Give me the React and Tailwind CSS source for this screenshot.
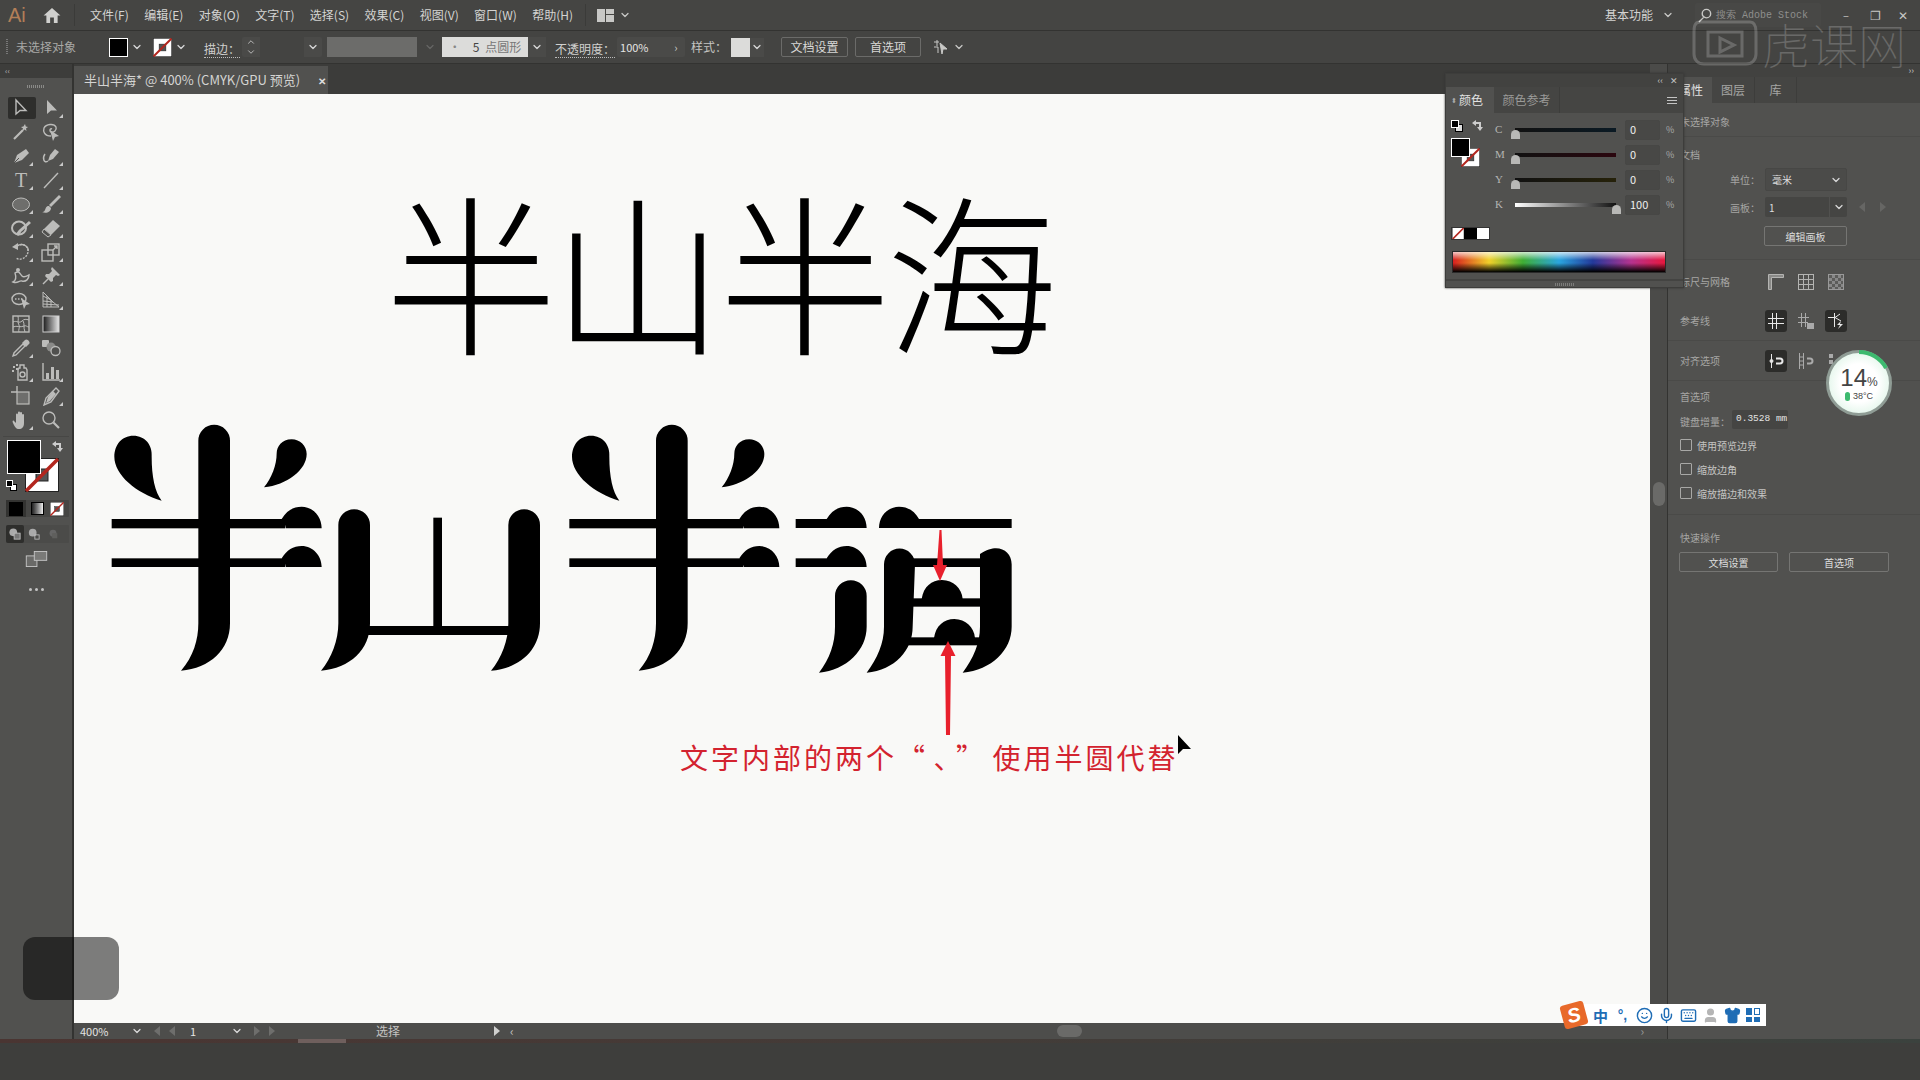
import React from 'react';
import { ChevronDown, Smile, Mic, Keyboard, User, Shirt } from 'lucide-react';

const Chev = ({ className = 'text-[#d8d8d8]' }) => <ChevronDown size={12} strokeWidth={2.5} className={className} />;

const Ic = ({ children, flag = true, active = false }) => (
  <div className="relative flex h-6 w-[30px] items-center justify-center">
    {active && <div className="absolute left-[2px] top-[1px] h-[22px] w-[28px] rounded-[2px] bg-[#2e2e2c]" />}
    <svg viewBox="0 0 20 20" className="relative h-5 w-5 text-[#bcbcba]" fill="currentColor" stroke="none">{children}</svg>
    {flag && <div className="absolute bottom-[2px] right-[3px] h-0 w-0 border-b-[4px] border-l-[4px] border-b-[#c8c8c8] border-l-transparent" />}
  </div>
);

const line = { fill: 'none', stroke: 'currentColor', strokeWidth: 1.4 };

function Tools() {
  return (
    <div className="grid w-[60px] grid-cols-2">
      <Ic flag={false} active><path d="M5 2 L5 16 L9 12.5 L15 12.5 Z" {...line} /></Ic>
      <Ic><path d="M6 2 L6 16 L10 12.5 L16 12.5 Z" /></Ic>
      <Ic flag={false}><path d="M3 17 L12 8" stroke="currentColor" strokeWidth="2.2" /><path d="M14 2 l.8 2.5 L17 5 l-2 1.4 .5 2.6 -2-1.5 -2 1.5 .5-2.6 -2-1.4 2.4-.5z" /></Ic>
      <Ic flag={false}><path d="M10 14 C3 14 2 9 3 6 C5 2 13 1 15 5 C16 8 13 11 10 10 C8 9 9 6 11 7" {...line} /><path d="M9 8 L18 14 L14 15 L12 19 Z" /></Ic>
      <Ic><path d="M15 3 L18 7 L11 14 L3 17 L6 9 Z" /><path d="M3 17 L8 12" stroke="#50504e" strokeWidth="1" /></Ic>
      <Ic><path d="M14 3 L18 6 L12 13 L7 15 L9 9 Z" /><path d="M7 15 C3 18 1 12 4 8" {...line} /></Ic>
      <Ic><text x="10" y="17" textAnchor="middle" fontSize="20" fontFamily="Liberation Serif, serif">T</text></Ic>
      <Ic><path d="M3 18 L17 3" {...line} /></Ic>
      <Ic><ellipse cx="10" cy="10.5" rx="8.5" ry="6.5" fill="#6e6e6c" stroke="currentColor" strokeWidth="1" /></Ic>
      <Ic><path d="M18 1 L20 3 L10 13 L8 11 Z" /><path d="M8 12 C5 12 5 14 4 16 C3 18 2 18 1 18 C5 20 10 18 10 14 Z" /></Ic>
      <Ic><ellipse cx="8" cy="10" rx="7" ry="6.5" {...line} strokeWidth="2" /><path d="M6 17 L9 13 L19 4" stroke="currentColor" strokeWidth="3" fill="none" /></Ic>
      <Ic><path d="M12 2 L19 8 L10 17 L3 11 Z" /><path d="M3 11 L10 17 L7 19 L1 14 Z" fill="#50504e" stroke="currentColor" strokeWidth="1" /></Ic>
      <Ic><path d="M6 4 C12 0 18 5 17 10 C16 16 9 19 5 16" {...line} strokeDasharray="2 1.2" /><path d="M7 1 L7 8 L1 5 Z" /><path d="M6 4 C12 0 18 5 17 9" {...line} /></Ic>
      <Ic><rect x="1" y="8" width="11" height="11" {...line} /><rect x="7" y="2" width="11" height="11" {...line} /><path d="M12 8 L16 4 M13 4 h3 v3" {...line} /></Ic>
      <Ic><path d="M2 16 C6 14 5 10 4 7 C8 4 9 8 11 10 C13 12 16 10 18 9 C18 13 15 16 11 15 C8 14 7 18 2 16 Z" {...line} /><circle cx="7" cy="4" r="2" /></Ic>
      <Ic><path d="M11 1 L19 9 L17 10 L15 9 L12 12 L12 15 L10 16 L4 10 L5 8 L8 8 L11 5 L10 3 Z" /><path d="M7 13 L2 18" {...line} /></Ic>
      <Ic flag={false}><ellipse cx="8" cy="9" rx="7" ry="5.5" {...line} /><path d="M4 9 h8" {...line} strokeDasharray="1.5 1.5" /><path d="M10 8 L19 14 L15 15 L13 19 Z" /></Ic>
      <Ic><path d="M2 2 L2 17 L18 17 M2 2 L12 12 L18 17 M2 6 L10 10 M2 11 L12 12 M6 6 L6 17 M10 10 L10 17 M2 14 L18 15" {...line} strokeWidth="1" /></Ic>
      <Ic flag={false}><rect x="2" y="2" width="16" height="16" fill="none" stroke="currentColor" strokeWidth="1.4" /><path d="M2 8 C6 6 8 10 11 7 C13 5 15 5 18 6 M7 2 C8 6 6 8 8 11 C9 14 7 16 8 18 M2 13 C6 11 9 14 13 12 C15 11 16 13 18 13 M12 7 C14 10 12 13 14 18" {...line} strokeWidth="1" /></Ic>
      <Ic flag={false}><defs><linearGradient id="tg"><stop offset="0" stopColor="#1a1a1a" /><stop offset="1" stopColor="#e8e8e8" /></linearGradient></defs><rect x="2" y="2" width="16" height="16" fill="url(#tg)" stroke="#cfcfcf" strokeWidth="1" /></Ic>
      <Ic><path d="M14 2 C16 0 20 4 18 6 L15 9 L11 5 Z" /><path d="M12 6 L14 8 L5 17 L2 18 L3 15 Z" {...line} /></Ic>
      <Ic flag={false}><rect x="1" y="2" width="7" height="7" rx="1" /><circle cx="10" cy="9" r="4.5" fill="#8a8a88" /><circle cx="14.5" cy="13" r="4.5" fill="#50504e" stroke="currentColor" strokeWidth="1.3" /></Ic>
      <Ic><path d="M2 4h2v2H2zM5 2h2v2H5zM5 6h2v2H5zM1 8h2v2H1z" /><path d="M9 3 h4 v3 h2 l1 2 v10 H7 V8 l1-2 h1z" {...line} /><circle cx="11.5" cy="12.5" r="2.5" {...line} /></Ic>
      <Ic><path d="M2 1 V18 H19" {...line} /><rect x="5" y="11" width="3" height="6" /><rect x="10" y="5" width="3" height="12" /><rect x="15" y="8" width="3" height="9" /></Ic>
      <Ic flag={false}><rect x="6" y="6" width="12" height="12" fill="#6e6e6c" stroke="currentColor" strokeWidth="1.2" /><path d="M0 6 H6 M6 0 V6" {...line} /></Ic>
      <Ic><path d="M15 2 L18 5 L10 16 L3 19 L5 12 Z" {...line} /><path d="M12 5 L15 8 L9 15 L5 17 L7 11Z" /></Ic>
      <Ic><path d="M5 9 V4.5 a1 1 0 0 1 2 0 V8 V2.5 a1 1 0 0 1 2 0 V8 V3 a1 1 0 0 1 2 0 V9 V5 a1 1 0 0 1 2 0 V13 C13 17 11 19 8 19 C5 19 4 17 2 13 C1 11 2 10 3 11 L5 13 Z" /></Ic>
      <Ic flag={false}><circle cx="8" cy="8" r="6" {...line} /><path d="M12.5 12.5 L18 18" stroke="currentColor" strokeWidth="2.2" /></Ic>
    </div>
  );
}

const NoneSwatch = ({ className }) => (
  <svg viewBox="0 0 34 34" className={className}>
    <rect x="0.5" y="0.5" width="33" height="33" fill="#fff" stroke="#222" />
    <rect x="11" y="11" width="12" height="12" fill="#555" stroke="#222" />
    <path d="M1 33 L33 1" stroke="#b3261e" strokeWidth="3.5" />
  </svg>
);

function LeftBar() {
  return (
    <div className="flex w-[74px] shrink-0 flex-col border-r-2 border-[#333331] bg-[#51514f]">
      <div className="flex h-[14px] items-center bg-[#3d3d3b] pl-[5px] text-[8px] leading-none text-[#bbb]">‹‹</div>
      <div className="flex h-[18px] items-center justify-center"><div className="mb-[2px] h-[3px] w-[18px] bg-[repeating-linear-gradient(90deg,#8a8a88_0,#8a8a88_1px,transparent_1px,transparent_2px)]" /></div>
      <div className="pl-[6px]"><Tools /></div>
      <div className="mx-[3px] mt-[4px] border-t border-[#474745]" />
      <div className="relative ml-[7px] mt-[3px] h-[52px] w-[58px]">
        <NoneSwatch className="absolute left-[18px] top-[18px] h-[34px] w-[34px]" />
        <div className="absolute left-0 top-0 h-[34px] w-[34px] border border-white bg-black" />
        <svg viewBox="0 0 12 12" className="absolute left-[44px] top-0 h-3 w-3 text-[#ccc]"><path d="M1 4 L5 1 L5 3 L10 3 L10 8 L12 8 L9 12 L6 8 L8 8 L8 5 L5 5 L5 7 Z" fill="currentColor" /></svg>
        <div className="absolute left-[-1px] top-[40px] h-[12px] w-[12px]">
          <div className="absolute left-[4px] top-[4px] h-[7px] w-[7px] border border-black bg-white" />
          <div className="absolute left-0 top-0 h-[7px] w-[7px] border border-white bg-black" />
        </div>
      </div>
      <div className="ml-[6px] mr-[3px] mt-[8px] flex h-[17px] items-center rounded-[1px] bg-[#464644]">
        <div className="flex h-full w-[20px] items-center justify-center bg-[#333331]"><div className="h-[14px] w-[14px] bg-black" /></div>
        <div className="ml-[5px] h-[13px] w-[13px] border border-black bg-linear-to-r from-[#222] to-[#eee]" />
        <NoneSwatch className="ml-[6px] h-[14px] w-[14px]" />
      </div>
      <div className="ml-[6px] mr-[3px] mt-[8px] flex h-[18px] items-center rounded-[1px] bg-[#4b4b49]">
        <div className="flex h-full w-[18px] items-center justify-center rounded-[2px] bg-[#2e2e2c]"><svg viewBox="0 0 14 14" className="h-3 w-3"><circle cx="5" cy="5" r="4.5" fill="#aaa" /><rect x="6" y="6" width="7" height="7" fill="#777" stroke="#bbb" /></svg></div>
        <div className="flex w-[20px] justify-center"><svg viewBox="0 0 14 14" className="h-3 w-3"><circle cx="5.5" cy="5.5" r="4.5" fill="#aaa" /><rect x="8" y="8" width="5" height="5" fill="none" stroke="#bbb" /></svg></div>
        <div className="flex w-[18px] justify-center"><svg viewBox="0 0 14 14" className="h-3 w-3"><circle cx="7" cy="6" r="4" fill="#666" /><rect x="6" y="6" width="6" height="6" fill="#5f5f5d" /></svg></div>
      </div>
      <div className="mt-[8px] flex justify-center"><svg viewBox="0 0 24 18" className="h-[16px] w-[23px]"><rect x="0.5" y="5.5" width="12" height="12" fill="#6a6a68" stroke="#c8c8c8" /><rect x="9.5" y="0.5" width="14" height="10" fill="#7a7a78" stroke="#c8c8c8" /></svg></div>
      <div className="mt-[21px] flex justify-center gap-[3px]"><div className="h-[3px] w-[3px] rounded-full bg-[#c4c4c4]" /><div className="h-[3px] w-[3px] rounded-full bg-[#c4c4c4]" /><div className="h-[3px] w-[3px] rounded-full bg-[#c4c4c4]" /></div>
    </div>
  );
}

function Han({ x }) {
  return (
    <g transform={`translate(${x} 410) scale(0.33333)`}>
      <path d="M100 77 C65 77 43 105 43 140 C43 195 110 250 185 272 C165 245 155 200 155 140 C158 105 135 77 100 77 Z" />
      <path d="M575 88 C545 88 530 110 530 130 C530 165 515 205 492 232 C560 225 620 180 620 132 C620 108 600 88 575 88 Z" />
      <path d="M295 92 A47.5 47.5 0 0 1 390 92 L390 640 C390 720 330 775 243 782 C280 740 295 690 295 640 Z" />
      <rect x="35" y="327" width="521" height="28" />
      <rect x="35" y="445" width="521" height="26" />
      <path d="M545 327 C560 302 580 290 605 290 C640 290 665 320 665 355 L558 355 C556 345 552 335 545 327 Z" />
      <path d="M545 445 C560 420 580 408 605 408 C640 408 665 438 665 471 L558 471 C556 462 552 452 545 445 Z" />
    </g>
  );
}

function Logotype() {
  return (
    <svg viewBox="74 94 1576 929" className="absolute left-0 top-0 h-[929px] w-[1576px]" fill="#000">
      <Han x={100} />
      <g transform="translate(100 410) scale(0.33333)">
        <path d="M715 345 A47.5 47.5 0 0 1 810 345 L810 640 C810 720 750 775 663 782 C695 745 715 690 715 640 Z" />
        <path d="M1225 345 A47.5 47.5 0 0 1 1320 345 L1320 640 C1320 720 1260 775 1173 782 C1205 745 1225 690 1225 640 Z" />
        <rect x="800" y="648" width="430" height="27" />
        <rect x="1000" y="323" width="26" height="330" />
      </g>
      <Han x={557.67} />
      <g transform="translate(560 410) scale(0.33333)">
        <rect x="707" y="327" width="106" height="27" />
        <rect x="707" y="445" width="106" height="26" />
        <path d="M800 327 C815 302 835 290 860 290 C895 290 920 320 920 354 L813 354 C811 345 807 335 800 327 Z" />
        <path d="M800 445 C815 420 835 408 860 408 C895 408 920 438 920 471 L813 471 C811 462 807 452 800 445 Z" />
        <path d="M825 558 A47.5 47.5 0 0 1 920 558 L920 650 C920 720 860 780 777 788 C810 745 825 700 825 650 Z" />
        <path d="M957 354 C957 320 982 290 1017 290 C1045 290 1065 305 1077 327 L1355 327 L1355 354 Z" />
        <path d="M972 463 A46.5 47.5 0 0 1 1065 463 L1058 650 C1058 720 1005 780 920 788 C952 745 972 700 972 650 Z" />
        <path d="M1260 432 C1280 420 1295 415 1308 415 C1335 415 1355 435 1355 463 L1355 650 C1355 720 1295 780 1208 788 C1240 745 1260 700 1260 650 Z" />
        <rect x="1040" y="445" width="225" height="26" />
        <rect x="1050" y="565" width="214" height="25" />
        <rect x="1030" y="682" width="232" height="24" />
        <path d="M1085 567 C1090 530 1115 510 1146 510 C1180 510 1205 535 1208 567 Z" />
        <path d="M1122 684 C1127 647 1152 627 1183 627 C1217 627 1242 652 1245 684 Z" />
      </g>
      <g fill="#e8202c">
        <path d="M939.5 530 L941.5 530 L943 565 L947 565 L940 581 L933 565 L937 565 Z" />
        <path d="M948 641 L955.5 656 L951 656 L950 735 L946 735 L945 656 L940.5 656 Z" />
      </g>
      <path d="M1178 735 L1178 754 L1183 749 L1191 749 Z" fill="#000" />
    </svg>
  );
}

const Pct = () => <span className="ml-[6px] text-[9px] text-[#aaa]">%</span>;

function CmykRow({ l, v, track, thumb }) {
  return (
    <div className="flex h-[25px] items-center">
      <span className="w-[21px] pl-[1px] font-['Liberation_Serif',serif] text-[11px] text-[#b5b5b3]">{l}</span>
      <div className="relative h-[4px] w-[101px]" style={{ background: track }}>
        <div className="absolute top-[2px] h-[9px] w-[9px] rounded-t-full bg-[#b8b8b6]" style={{ left: thumb }} />
      </div>
      <div className="ml-[9px] flex h-[20px] w-[35px] items-center rounded-[2px] border border-[#474745] bg-[#484846] pl-[4px] text-[11px] text-[#eee]">{v}</div>
      <Pct />
    </div>
  );
}

function ColorPanel() {
  return (
    <div className="absolute left-[1445px] top-[73px] h-[215px] w-[239px] border border-[#3d3d3b] bg-[#51514f] shadow-[0_0_2px_#333]">
      <div className="flex h-[13px] items-center justify-end gap-[7px] bg-[#424240] pr-[5px] text-[9px] leading-none text-[#c4c4c4]"><span>‹‹</span><span>✕</span></div>
      <div className="flex h-[26px] bg-[#454543] text-[12px]">
        <div className="flex w-[48px] items-center gap-[2px] bg-[#51514f] pl-[5px] text-[#e2e2e2]"><span className="text-[7px] text-[#aaa]">⬍</span>颜色</div>
        <div className="flex w-[66px] items-center justify-center border-r border-[#3d3d3b] text-[#9b9b99]">颜色参考</div>
        <div className="ml-auto mr-[6px] flex flex-col justify-center gap-[2px]"><div className="h-px w-[10px] bg-[#c4c4c4]" /><div className="h-px w-[10px] bg-[#c4c4c4]" /><div className="h-px w-[10px] bg-[#c4c4c4]" /></div>
      </div>
      <div className="flex">
        <div className="relative h-[110px] w-[48px] shrink-0">
          <div className="absolute left-[5px] top-[7px] h-[12px] w-[12px]"><div className="absolute left-[4px] top-[4px] h-[8px] w-[8px] border border-black bg-[#ddd]" /><div className="absolute left-0 top-0 h-[8px] w-[8px] border border-white bg-black" /></div>
          <svg viewBox="0 0 12 12" className="absolute left-[25px] top-[6px] h-3 w-3 text-[#ccc]"><path d="M1 4 L5 1 L5 3 L10 3 L10 8 L12 8 L9 12 L6 8 L8 8 L8 5 L5 5 L5 7 Z" fill="currentColor" /></svg>
          <NoneSwatch className="absolute left-[15px] top-[35px] h-[19px] w-[19px]" />
          <div className="absolute left-[5px] top-[25px] h-[19px] w-[19px] border border-white bg-black" />
        </div>
        <div className="pt-[4px]">
          <CmykRow l="C" v="0" track="linear-gradient(90deg,#111,#0b1a24)" thumb="-4px" />
          <CmykRow l="M" v="0" track="linear-gradient(90deg,#111,#2a060e)" thumb="-4px" />
          <CmykRow l="Y" v="0" track="linear-gradient(90deg,#111,#26220a)" thumb="-4px" />
          <CmykRow l="K" v="100" track="linear-gradient(90deg,#fff,#111)" thumb="97px" />
        </div>
      </div>
      <div className="ml-[5px] mt-[4px] flex h-[13px] w-[39px] border border-[#333]">
        <svg viewBox="0 0 13 13" className="h-full w-[13px]"><rect width="13" height="13" fill="#fff" /><path d="M0 13 L13 0" stroke="#b3261e" strokeWidth="2" /></svg>
        <div className="h-full w-[13px] bg-black" />
        <div className="h-full w-[13px] bg-white" />
      </div>
      <div className="relative ml-[6px] mt-[11px] h-[22px] w-[214px] border border-[#2a2a2a] bg-[linear-gradient(90deg,#d81f1f_0%,#f0d02a_17%,#3fae35_33%,#2aa5df_50%,#23399a_66%,#b5338f_84%,#e8173d_100%)]">
        <div className="absolute inset-0 bg-[linear-gradient(180deg,rgba(255,255,255,0.75)_0%,rgba(255,255,255,0)_40%,rgba(0,0,0,0)_55%,rgba(0,0,0,1)_100%)]" />
      </div>
      <div className="mt-[6px] flex h-[8px] items-center justify-center border-t-2 border-[#444442]"><div className="h-[3px] w-[20px] bg-[repeating-linear-gradient(90deg,#7c7c7a_0,#7c7c7a_1px,transparent_1px,transparent_2px)]" /></div>
    </div>
  );
}

const Check = ({ t }) => (
  <div className="flex h-[24px] items-center gap-[5px] pl-[12px]">
    <div className="h-[12px] w-[12px] rounded-[1px] border border-[#a8a8a6]" />
    <span className="text-[10px] text-[#c4c4c2]">{t}</span>
  </div>
);

const Cell = ({ on, children }) => (
  <div className={`flex h-[22px] w-[22px] items-center justify-center rounded-[3px] ${on ? 'bg-[#2c2c2a]' : ''}`}>
    <svg viewBox="0 0 18 18" className="h-[18px] w-[18px]" fill="none" stroke="#e8e8e8" strokeWidth="1">{children}</svg>
  </div>
);

function RightPanel() {
  const label = 'text-[10px] text-[#a6a6a4]';
  const div = 'border-b border-[#4a4a48]';
  return (
    <div className="flex w-[252px] shrink-0 flex-col bg-[#51514f]">
      <div className="flex h-[13px] items-center justify-end bg-[#424240] pr-[6px] text-[9px] leading-none text-[#c4c4c4]">››</div>
      <div className="flex h-[26px] bg-[#454543] text-[12px]">
        <div className="flex w-[44px] items-center justify-end bg-[#51514f] pr-[9px] text-[#e2e2e2]">属性</div>
        <div className="flex w-[43px] items-center justify-center border-r border-[#3d3d3b] text-[#a6a6a4]">图层</div>
        <div className="flex w-[42px] items-center justify-center border-r border-[#3d3d3b] text-[#a6a6a4]">库</div>
      </div>
      <div className={`flex h-[34px] items-center pl-[12px] pt-[4px] ${div} ${label}`}>未选择对象</div>
      <div className={`h-[123px] pt-[8px] ${div}`}>
        <div className={`flex h-[18px] items-center pl-[12px] ${label}`}>文档</div>
        <div className="mt-[5px] flex items-center">
          <span className={`w-[92px] text-right ${label}`}>单位：</span>
          <div className="ml-[5px] flex h-[23px] w-[82px] items-center justify-between rounded-[2px] border border-[#474745] bg-[#4b4b49] pl-[6px] pr-[4px] text-[10px] text-[#ddd]">毫米<Chev /></div>
        </div>
        <div className="mt-[6px] flex items-center">
          <span className={`w-[92px] text-right ${label}`}>画板：</span>
          <div className="ml-[5px] flex h-[20px] w-[82px] items-center rounded-[2px] bg-[#454543] pl-[4px] text-[10px] text-[#ddd]"><span className="flex-1">1</span><div className="flex h-full w-[18px] items-center justify-center border-l border-[#51514f]"><Chev /></div></div>
          <div className="ml-[12px] h-0 w-0 border-y-[5px] border-r-[6px] border-y-transparent border-r-[#666664]" />
          <div className="ml-[15px] h-0 w-0 border-y-[5px] border-l-[6px] border-y-transparent border-l-[#666664]" />
        </div>
        <div className="ml-[96px] mt-[9px] flex h-[20px] w-[83px] items-center justify-center rounded-[2px] border border-[#757573] text-[10px] text-[#ddd]">编辑画板</div>
      </div>
      <div className={`flex h-[41px] items-center pl-[12px] pt-[2px] ${label}`}>
        <span className="w-[88px]">标尺与网格</span>
        <svg viewBox="0 0 16 16" className="h-4 w-4" fill="none" stroke="#b4b4b2" strokeWidth="1"><path d="M0.5 15.5 V0.5 H15.5 V3.5 H3.5 V15.5 Z" fill="#8a8a88" /></svg>
        <svg viewBox="0 0 16 16" className="ml-[14px] h-4 w-4" fill="none" stroke="#b4b4b2" strokeWidth="1"><rect x="0.5" y="0.5" width="15" height="15" /><path d="M5.5 0 V16 M10.5 0 V16 M0 5.5 H16 M0 10.5 H16" /></svg>
        <div className="ml-[14px] h-4 w-4 border border-[#999] bg-[repeating-conic-gradient(#888_0_25%,#5c5c5a_0_50%)] bg-[length:6px_6px]" />
      </div>
      <div className={`flex h-[40px] items-center pl-[12px] ${div} ${label}`}>
        <span className="w-[85px]">参考线</span>
        <Cell on><path d="M5.5 1 V17 M9.5 1 V17 M1 6.5 H17 M1 11.5 H17" /></Cell>
        <div className="ml-[8px]"><Cell><path d="M4.5 1 V15 M8.5 1 V15 M1 5.5 H12 M1 10.5 H11" stroke="#aaa" /><rect x="10" y="11" width="7" height="6" fill="#aaa" stroke="none" /></Cell></div>
        <div className="ml-[8px]"><Cell on><path d="M7.5 1 V15 M1 5.5 H8 L13 2 M8 5.5 L14 9" /><path d="M14 9 L10 13 H13 L11 17 L16 12 H13 Z" fill="#e8e8e8" stroke="none" /></Cell></div>
      </div>
      <div className={`flex h-[40px] items-center pl-[12px] ${div} ${label}`}>
        <span className="w-[85px]">对齐选项</span>
        <Cell on><path d="M4.5 2 V16" /><circle cx="4.5" cy="9" r="1.5" fill="#e8e8e8" /><path d="M9 6.5 H13 A2.5 2.5 0 0 1 13 11.5 H9" strokeWidth="2" /></Cell>
        <div className="ml-[8px]"><Cell><path d="M2.5 1 V17 M6.5 1 V17 M2 5 H7 M2 9 H7 M2 13 H7" stroke="#aaa" /><path d="M10 6.5 H13 A2.5 2.5 0 0 1 13 11.5 H10" stroke="#aaa" strokeWidth="2" /></Cell></div>
        <div className="ml-[8px]"><Cell><rect x="2" y="2" width="4" height="4" fill="#aaa" stroke="none" /><rect x="2" y="8" width="4" height="4" fill="#aaa" stroke="none" /></Cell></div>
      </div>
      <div className={`h-[134px] pt-[6px] ${div}`}>
        <div className={`flex h-[18px] items-center pl-[12px] ${label}`}>首选项</div>
        <div className="mt-[5px] flex items-center pl-[12px]">
          <span className={`w-[52px] pt-[3px] ${label}`}>键盘增量：</span>
          <div className="flex h-[19px] w-[56px] items-center rounded-[2px] bg-[#454543] pl-[4px] font-['Liberation_Mono',monospace] text-[9.5px] whitespace-nowrap text-[#e4e4e4]">0.3528 mm</div>
        </div>
        <div className="mt-[4px]"><Check t="使用预览边界" /><Check t="缩放边角" /><Check t="缩放描边和效果" /></div>
      </div>
      <div className={`flex h-[37px] items-center pl-[12px] pt-[7px] ${label}`}>快速操作</div>
      <div className="flex gap-[11px] pl-[11px]">
        <div className="flex h-[20px] w-[99px] items-center justify-center rounded-[2px] border border-[#757573] text-[10px] text-[#ddd]">文档设置</div>
        <div className="flex h-[20px] w-[100px] items-center justify-center rounded-[2px] border border-[#757573] text-[10px] text-[#ddd]">首选项</div>
      </div>
    </div>
  );
}

function Gauge() {
  return (
    <div className="absolute left-[1826px] top-[350px] flex h-[66px] w-[66px] flex-col items-center justify-center rounded-full border-[3px] border-[#8f9c95] bg-[radial-gradient(circle,#ffffff_45%,#e9f8ef_70%,#bfeacf_100%)] text-[#444]">
      <svg viewBox="0 0 66 66" className="absolute -left-[3px] -top-[3px] h-[66px] w-[66px]"><path d="M33 2 A31 31 0 0 1 60 18" fill="none" stroke="#3dba6f" strokeWidth="4" /></svg>
      <div className="flex items-baseline font-['Liberation_Sans',sans-serif] leading-none"><span className="text-[24px]">14</span><span className="text-[12px]">%</span></div>
      <div className="mt-[2px] flex items-center gap-[3px] font-['Liberation_Sans',sans-serif] text-[9px] leading-none"><div className="h-[9px] w-[5px] rounded-full bg-[#3dba6f]" />38°C</div>
    </div>
  );
}

function Ime() {
  return (
    <div className="absolute left-[1562px] top-[1003px] flex items-center">
      <div className="relative z-10 flex h-[24px] w-[24px] -rotate-[15deg] items-center justify-center rounded-[3px] bg-[#e8692a] font-['Liberation_Sans',sans-serif] text-[20px] font-black italic leading-none text-white">S</div>
      <div className="-ml-[8px] flex h-[22px] w-[188px] items-center gap-[5px] bg-white pl-[14px] text-[#1f6db5]">
        <span className="w-[17px] text-center text-[15px] font-bold leading-none">中</span>
        <span className="w-[17px] text-center font-['Liberation_Sans',sans-serif] text-[14px] font-bold leading-none">°,</span>
        <Smile size={17} />
        <Mic size={17} />
        <Keyboard size={17} />
        <User size={17} className="text-[#b5b5b5]" fill="#b5b5b5" />
        <Shirt size={17} fill="#1f6db5" />
        <div className="grid h-[14px] w-[14px] grid-cols-2 gap-[2px]"><div className="bg-[#1f6db5]" /><div className="border border-[#1f6db5]" /><div className="bg-[#1f6db5]" /><div className="bg-[#1f6db5]" /></div>
      </div>
    </div>
  );
}

function Watermark() {
  return (
    <div className="absolute left-[1692px] top-[18px] flex items-center gap-[4px] whitespace-nowrap text-white opacity-20">
      <svg viewBox="0 0 66 50" className="h-[50px] w-[66px]" fill="none" stroke="currentColor" strokeWidth="3">
        <path d="M8 4 H58 M8 4 C2 4 2 10 2 14 V36 C2 42 6 46 12 46 H54 C60 46 64 42 64 36 V14 C64 8 62 4 58 4" />
        <path d="M16 14 H50 V38 H16 Z" />
        <path d="M28 20 L42 27 L28 34 Z" />
      </svg>
      <span className="text-[48px] font-thin leading-none">虎课网</span>
    </div>
  );
}

const Menu = ({ children }) => <span className="text-[12px] text-[#d4d4d2]">{children}</span>;

const Dotted = ({ children }) => <span className="border-b border-dotted border-[#bbb] text-[12px] leading-[14px] text-[#d0d0ce]">{children}</span>;

export default function App() {
  return (
    <div className="relative flex h-[1080px] w-[1920px] flex-col overflow-hidden bg-[#3e3e3c] [font-family:'Noto_Sans_CJK_SC','Liberation_Sans',sans-serif]">
      {/* menu bar */}
      <div className="flex h-[31px] shrink-0 items-center border-b border-[#333331] bg-[#454543]">
        <span className="ml-[8px] w-[20px] font-['Liberation_Sans',sans-serif] text-[20px] leading-none text-[#b37f58]">Ai</span>
        <svg viewBox="0 0 18 16" className="ml-[15px] h-[15px] w-[18px]" fill="#d0d0ce"><path d="M9 0 L18 8 H15 V16 H11 V10 H7 V16 H3 V8 H0 Z" /></svg>
        <div className="ml-[13px] h-[22px] w-px bg-[#3b3b39]" />
        <div className="ml-[15px] flex gap-[15.4px]">
          <Menu>文件(F)</Menu><Menu>编辑(E)</Menu><Menu>对象(O)</Menu><Menu>文字(T)</Menu><Menu>选择(S)</Menu><Menu>效果(C)</Menu><Menu>视图(V)</Menu><Menu>窗口(W)</Menu><Menu>帮助(H)</Menu>
        </div>
        <div className="ml-[12px] h-[22px] w-px bg-[#3b3b39]" />
        <svg viewBox="0 0 17 13" className="ml-[11px] h-[13px] w-[17px]" fill="#c8c8c6"><rect width="8" height="13" /><rect x="9" width="8" height="5" /><rect x="9" y="6" width="8" height="7" /></svg>
        <Chev className="ml-[5px] text-[#c8c8c6]" />
        <div className="ml-auto flex items-center">
          <span className="text-[12px] text-[#d4d4d2]">基本功能</span>
          <Chev className="ml-[9px] text-[#c8c8c6]" />
          <div className="ml-[21px] flex h-[24px] w-[126px] items-center gap-[3px] rounded-[2px] bg-[#484846] pl-[3px]">
            <svg viewBox="0 0 16 16" className="h-[15px] w-[15px]" fill="none" stroke="#c8c8c6" strokeWidth="1.5"><circle cx="9" cy="6" r="4.5" /><path d="M6 10 L1 15" /></svg>
            <span className="whitespace-nowrap font-['Liberation_Mono',monospace] text-[10px] text-[#8f8f8d]">搜索 Adobe Stock</span>
          </div>
          <div className="ml-[10px] flex h-[24px] w-[30px] items-center justify-center text-[11px] text-[#c8c8c6]">–</div>
          <div className="flex h-[24px] w-[28px] items-center justify-center text-[12px] text-[#c8c8c6]">❐</div>
          <div className="flex h-[24px] w-[28px] items-center justify-center text-[12px] text-[#c8c8c6]">✕</div>
          <div className="w-[3px]" />
        </div>
      </div>

      {/* options bar */}
      <div className="flex h-[33px] shrink-0 items-center border-b border-[#333331] bg-[#444442]">
        <div className="ml-[6px] h-[16px] w-[2px] bg-[repeating-linear-gradient(180deg,#777_0,#777_1px,transparent_1px,transparent_2px)]" />
        <span className="ml-[8px] w-[93px] text-[12px] text-[#a8a8a6]">未选择对象</span>
        <div className="h-[19px] w-[19px] border border-white bg-black" />
        <div className="flex h-[19px] w-[18px] items-center justify-center"><Chev /></div>
        <NoneSwatch className="ml-[7px] h-[19px] w-[19px]" />
        <div className="flex h-[19px] w-[18px] items-center justify-center"><Chev /></div>
        <div className="ml-[14px]"><Dotted>描边：</Dotted></div>
        <div className="ml-[2px] flex h-[20px] w-[80px] items-center rounded-[2px] bg-[#4a4a48]">
          <div className="flex h-full w-[18px] flex-col items-center justify-center"><ChevronDown size={10} className="rotate-180 text-[#ccc]" /><ChevronDown size={10} className="text-[#ccc]" /></div>
          <div className="h-full flex-1 bg-[#444442]" />
          <div className="flex h-full w-[18px] items-center justify-center"><Chev /></div>
        </div>
        <div className="ml-[5px] h-[20px] w-[90px] bg-[#6c6c6a]" />
        <div className="flex h-[20px] w-[25px] items-center justify-center"><Chev className="text-[#666664]" /></div>
        <div className="flex h-[20px] w-[86px] items-center justify-center gap-[6px] bg-[#dcdcda] text-[12px] text-[#444]"><span className="mr-[6px] text-[#888]">·</span>5 <span className="text-[#777]">点圆形</span></div>
        <div className="flex h-[20px] w-[18px] items-center justify-center bg-[#4a4a48]"><Chev /></div>
        <div className="ml-[9px]"><Dotted>不透明度：</Dotted></div>
        <div className="ml-[2px] flex h-[20px] w-[68px] items-center rounded-[2px] bg-[#4a4a48] pl-[3px] text-[11px] text-[#e4e4e2]"><span className="flex-1">100%</span><span className="w-[18px] text-center text-[#ccc]">›</span></div>
        <span className="ml-[6px] text-[12px] text-[#c4c4c2]">样式：</span>
        <div className="ml-[4px] h-[19px] w-[19px] bg-[#dcdcda]" />
        <div className="flex h-[19px] w-[14px] items-center justify-center bg-[#4a4a48]"><Chev /></div>
        <div className="ml-[17px] flex h-[20px] w-[67px] items-center justify-center rounded-[2px] border border-[#6b6b69] text-[12px] text-[#d8d8d6]">文档设置</div>
        <div className="ml-[7px] flex h-[20px] w-[66px] items-center justify-center rounded-[2px] border border-[#6b6b69] text-[12px] text-[#d8d8d6]">首选项</div>
        <svg viewBox="0 0 16 16" className="ml-[12px] h-[16px] w-[16px]" fill="none" stroke="#c8c8c6"><path d="M1 3 H6 M4 1 V7 M1 8 H5 V14" /><path d="M7 4 L14 10 L10 10 L9 15 Z" fill="#c8c8c6" /></svg>
        <Chev className="ml-[4px] text-[#c8c8c6]" />
      </div>

      {/* middle */}
      <div className="flex h-[975px] shrink-0">
        <LeftBar />
        <div className="flex w-[1576px] shrink-0 flex-col">
          <div className="flex h-[30px] shrink-0 items-end bg-[#3c3c3a]">
            <div className="flex h-[28px] w-[254px] items-center gap-[18px] bg-[#51514f] pl-[10px] text-[13px] text-[#d4d4d2]">
              <span className="whitespace-nowrap">半山半海* @ 400% (CMYK/GPU 预览)</span>
              <span className="text-[10px] font-bold text-[#ddd]">✕</span>
            </div>
          </div>
          <div className="relative flex-1 overflow-hidden bg-[#f9f9f7]">
            <div className="absolute left-[311px] top-[73px] whitespace-nowrap text-[172px] font-extralight leading-[200px] tracking-[-5px] text-black">半山半海</div>
            <Logotype />
            <div className="absolute left-[606px] top-[645px] whitespace-nowrap text-[28px] leading-[36px] tracking-[3px] text-[#d3232f]">文字内部的两个<span className="tracking-[8.5px]">“、”</span>使用半圆代替</div>
          </div>
          <div className="flex h-[16px] shrink-0 items-center bg-[#4d4d4b] text-[11px] text-[#e4e4e2]">
            <div className="ml-[4px] w-[50px] pl-[2px]">400%</div>
            <div className="flex w-[18px] justify-center"><Chev /></div>
            <div className="ml-[8px] flex w-[34px] items-center gap-[9px] text-[#6e6e6c]"><span className="h-0 w-0 border-y-[5px] border-r-[6px] border-y-transparent border-r-[#6e6e6c]" /><span className="h-0 w-0 border-y-[5px] border-r-[6px] border-y-transparent border-r-[#6e6e6c]" /></div>
            <div className="w-[40px] pl-[2px]">1</div>
            <div className="flex w-[18px] justify-center"><Chev /></div>
            <div className="ml-[8px] flex w-[36px] items-center gap-[9px]"><span className="h-0 w-0 border-y-[5px] border-l-[6px] border-y-transparent border-l-[#6e6e6c]" /><span className="h-0 w-0 border-y-[5px] border-l-[6px] border-y-transparent border-l-[#6e6e6c]" /></div>
            <div className="w-[196px] text-center text-[12px] text-[#c4c4c2]">选择</div>
            <span className="ml-[8px] h-0 w-0 border-y-[5px] border-l-[6px] border-y-transparent border-l-[#d0d0ce]" />
            <span className="ml-[10px] text-[12px] leading-none text-[#c4c4c2]">‹</span>
            <div className="ml-[543px] h-[12px] w-[25px] rounded-full bg-[#6a6a68]" />
            <span className="ml-auto mr-[6px] text-[12px] leading-none text-[#9a9a98]">›</span>
          </div>
        </div>
        <div className="flex w-[18px] shrink-0 items-center justify-center border-r border-[#333331] bg-[#4b4b49]">
          <div className="mt-[-115px] h-[24px] w-[12px] rounded-full bg-[#6a6a68]" />
        </div>
        <RightPanel />
      </div>
      <div className="relative h-[4px] shrink-0 bg-linear-to-r from-[#4a3532] to-[#3b423e]">
        <div className="absolute left-[298px] top-0 h-[4px] w-[48px] bg-[#6f5f5d]" />
      </div>

      {/* overlays */}
      <Watermark />
      <ColorPanel />
      <Gauge />
      <Ime />
      <div className="absolute left-[23px] top-[937px] h-[63px] w-[96px] rounded-[12px] bg-black/50" />
    </div>
  );
}
